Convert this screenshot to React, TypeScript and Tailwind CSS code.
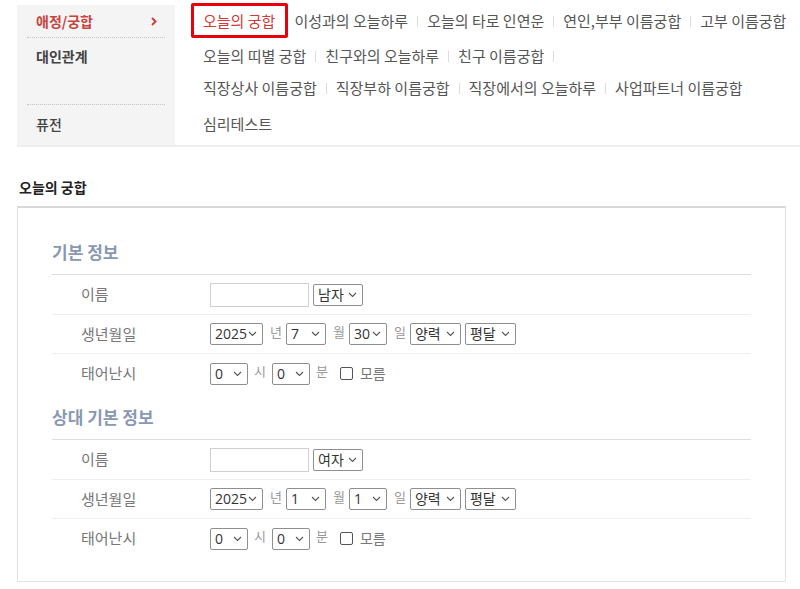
import React from 'react';

const Chevron = () => (
  <svg width="9" height="6" viewBox="0 0 9 6" className="shrink-0">
    <path d="M1 1l3.5 3.5L8 1" fill="none" stroke="#555" strokeWidth="1.1" />
  </svg>
);

const Select = ({ value, w }: { value: string; w: string }) => (
  <div
    className={`flex h-[22px] shrink-0 items-center justify-between rounded-[2px] border border-[#8f8f8f] bg-white pl-[4px] pr-[5px] font-['Open_Sans','Noto_Sans_CJK_KR',sans-serif] text-[14px] leading-none text-[#333] ${w}`}
  >
    <span>{value}</span>
    <Chevron />
  </div>
);

const Unit = ({ children }: { children: React.ReactNode }) => (
  <span className="mb-[6px] ml-[7px] mr-[4px] text-[13px] leading-none text-[#999]">{children}</span>
);

const Sep = () => <span className="mx-[9px] h-[11px] w-px bg-[#dcdcdc]" />;

const NavLine = ({ items, trailing }: { items: string[]; trailing?: boolean }) => (
  <div className="flex h-[32px] items-center whitespace-nowrap text-[15px] text-[#555]">
    {items.map((item, i) => (
      <React.Fragment key={item}>
        {i > 0 && <Sep />}
        <span>{item}</span>
      </React.Fragment>
    ))}
    {trailing && <Sep />}
  </div>
);

const Row = ({ label, h, children }: { label: string; h: string; children: React.ReactNode }) => (
  <div className={`flex items-center ${h}`}>
    <div className="w-[158px] shrink-0 pl-[29px] text-[15px] text-[#777]">{label}</div>
    <div className="flex items-center">{children}</div>
  </div>
);

const InfoSection = ({ title, gender, month, day, top }: { title: string; gender: string; month: string; day: string; top: string }) => (
  <div>
    <h3 className={`border-b border-[#ddd] pb-[10px] text-[17px] font-bold leading-[24px] text-[#8898b2] ${top}`}>{title}</h3>
    <div className="divide-y divide-[#eee]">
      <Row label="이름" h="h-[40px]">
        <div className="h-[24px] w-[99px] border border-[#d0d0d0] bg-white" />
        <div className="ml-[4px]">
          <Select value={gender} w="w-[50px]" />
        </div>
      </Row>
      <Row label="생년월일" h="h-[39px]">
        <Select value="2025" w="w-[53px]" />
        <Unit>년</Unit>
        <Select value={month} w="w-[40px]" />
        <Unit>월</Unit>
        <Select value={day} w="w-[38px]" />
        <Unit>일</Unit>
        <Select value="양력" w="w-[51px]" />
        <div className="ml-[4px]">
          <Select value="평달" w="w-[51px]" />
        </div>
      </Row>
      <Row label="태어난시" h="h-[39px]">
        <Select value="0" w="w-[38px]" />
        <span className="mb-[6px] ml-[6px] mr-[6px] text-[13px] leading-none text-[#999]">시</span>
        <Select value="0" w="w-[38px]" />
        <span className="mb-[6px] ml-[6px] mr-[12px] text-[13px] leading-none text-[#999]">분</span>
        <span className="h-[13px] w-[13px] rounded-[2px] border border-[#555] bg-white" />
        <span className="ml-[7px] text-[14px] text-[#777]">모름</span>
      </Row>
    </div>
  </div>
);

export default function App() {
  return (
    <div className="min-h-screen bg-white pt-[5px] font-['Noto_Sans_CJK_KR','Noto_Sans',sans-serif]">
      <nav className="ml-[17px] flex border-b-2 border-[#eee]">
        <div className="w-[158px] shrink-0 bg-[#f4f4f4] text-[14px]">
          <div className="flex h-[32px] items-center justify-between pl-[19px] pr-[18px] font-bold text-[#c8433f]">
            <span>애정/궁합</span>
            <svg width="6" height="9" viewBox="0 0 6 9">
              <path d="M1 1l3.5 3.5L1 8" fill="none" stroke="#c8433f" strokeWidth="2" />
            </svg>
          </div>
          <div className="mx-[10px] border-b border-dotted border-[#c4c4c4]" />
          <div className="h-[66px] pt-[2px]">
            <div className="flex h-[32px] items-center pl-[19px] font-bold text-[#444]">대인관계</div>
          </div>
          <div className="mx-[10px] border-b border-dotted border-[#c4c4c4]" />
          <div className="h-[40px] pt-[3px]">
            <div className="flex h-[32px] items-center pl-[19px] font-medium text-[#444]">퓨전</div>
          </div>
        </div>
        <div className="relative flex-1 pl-[28px]">
          <div className="flex h-[32px] items-center whitespace-nowrap text-[15px] text-[#555]">
            <span className="mr-[19px] text-[#d23a36]">오늘의 궁합</span>
            <span>이성과의 오늘하루</span>
            <Sep />
            <span>오늘의 타로 인연운</span>
            <Sep />
            <span>연인,부부 이름궁합</span>
            <Sep />
            <span>고부 이름궁합</span>
          </div>
          <div className="h-px" />
          <div className="h-[66px] pt-[2px]">
            <NavLine items={['오늘의 띠별 궁합', '친구와의 오늘하루', '친구 이름궁합']} trailing />
            <NavLine items={['직장상사 이름궁합', '직장부하 이름궁합', '직장에서의 오늘하루', '사업파트너 이름궁합']} />
          </div>
          <div className="h-px" />
          <div className="h-[40px] pt-[3px]">
            <NavLine items={['심리테스트']} />
          </div>
          <div className="absolute left-[16px] top-[-2px] h-[35px] w-[97px] rounded-[2px] border-[3px] border-[#e8000b]" />
        </div>
      </nav>

      <h2 className="ml-[19px] mt-[30px] text-[14px] font-bold leading-[20px] text-[#222]">오늘의 궁합</h2>

      <div className="ml-[17px] mr-[14px] mt-[9px] border border-t-2 border-[#e3e3e3] border-t-[#d9d9d9] px-[34px] pb-[23px]">
        <InfoSection title="기본 정보" gender="남자" month="7" day="30" top="pt-[32px]" />
        <InfoSection title="상대 기본 정보" gender="여자" month="1" day="1" top="pt-[12px]" />
      </div>
    </div>
  );
}
